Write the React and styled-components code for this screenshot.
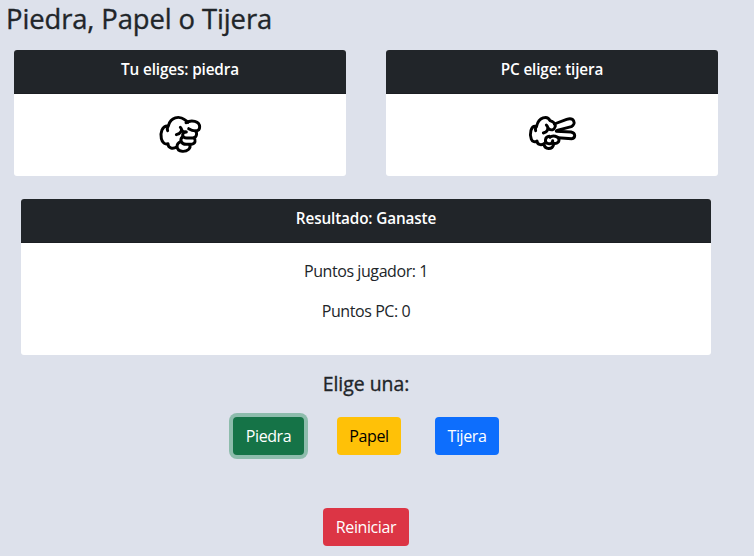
import React from 'react';
import styled, { createGlobalStyle } from 'styled-components';

const GlobalStyle = createGlobalStyle`
  *, *::before, *::after { box-sizing: border-box; }
  body {
    margin: 0;
    background: #dde1eb;
    color: #212529;
    font: 400 16px/24px "Segoe UI", "Open Sans", "Noto Sans", sans-serif;
    overflow: hidden;
  }
`;

const Page = styled.main`
  width: 754px;
  height: 556px;
  overflow: hidden;
`;

const Title = styled.h1`
  margin: 0;
  padding: 2px 0 0 6px;
  height: 50px;
  font-size: 27.4px;
  line-height: 34px;
  font-weight: 500;
  letter-spacing: -0.1px;
  -webkit-text-stroke: 0.35px currentColor;
  white-space: nowrap;
`;

const Choices = styled.section`
  display: grid;
  grid-template-columns: 332px 332px;
  gap: 40px;
  padding-left: 14px;
`;

const Card = styled.article`
  height: ${(p) => p.$height};
  background: #fff;
  border-radius: 3px;
  overflow: hidden;
  text-align: center;
`;

const CardHeader = styled.header`
  height: 44px;
  padding-top: 7px;
  background: #212529;
  border-bottom: 1px solid #1b1e22;
  color: #fff;
  font-size: 15.3px;
  font-weight: 600;
  letter-spacing: -0.14px;
`;

const HandArea = styled.div`
  display: flex;
  justify-content: center;
  padding-top: 11px;

  svg {
    display: block;
    fill: none;
    stroke: #000;
    stroke-width: 8.8;
    stroke-linecap: round;
    stroke-linejoin: round;
  }
`;

const Result = styled.section`
  width: 690px;
  margin: 23px 0 0 21px;
`;

const Score = styled.p`
  margin: 16px 0 0;
  letter-spacing: -0.42px;
`;

const Controls = styled.section`
  width: 732px;
  display: flex;
  flex-direction: column;
  align-items: center;
`;

const Prompt = styled.h2`
  margin: 17px 0 21px;
  font-size: 19.4px;
  line-height: 24px;
  font-weight: 500;
  -webkit-text-stroke: 0.35px currentColor;
`;

const ButtonRow = styled.div`
  display: flex;
  margin-bottom: 53px;
`;

const tones = {
  success: '#157347',
  warning: '#ffc107',
  primary: '#0d6efd',
  danger: '#dc3545',
};

const Button = styled.button`
  height: 38px;
  width: ${(p) => p.$width};
  margin-right: ${(p) => p.$gap || '0'};
  padding: 0 0 1px;
  border: 0;
  border-radius: 4px;
  background: ${(p) => tones[p.$tone]};
  color: ${(p) => (p.$tone === 'warning' ? '#000' : '#fff')};
  box-shadow: ${(p) => (p.$active ? '0 0 0 4px #8dbcac' : 'none')};
  font: inherit;
  letter-spacing: -0.4px;
`;

function RockHand() {
  return (
    <svg width="60" height="60" viewBox="0 0 180 180" aria-label="piedra">
      <path d="M53 63C37 62 30 82 34 101C37 114 45 119 54 116C54 128 67 134 80 126" />
      <path d="M53 77C49 68 55 66 56 60C62 37 87 31 104 44C109 47 112 50 114 52" />
      <path d="M108 53C124 43 149 48 149 66C149 80 132 81 116 71" />
      <path d="M91 67C99 75 93 85 79 89M94 73C97 79 103 82 109 81" />
      <path d="M106 81C93 86 97 99 110 99H128C143 98 141 81 136 78" />
      <path d="M98 95C87 105 95 118 108 118H124C137 116 138 105 132 99" />
      <path d="M92 110C77 116 77 137 97 139C112 140 124 130 119 119" />
    </svg>
  );
}

function ScissorsHand() {
  return (
    <svg width="60" height="60" viewBox="0 0 180 180" aria-label="tijera">
      <path d="M43 64C26 60 22 87 28 103C31 111 39 112 45 108C46 119 57 122 66 116" />
      <path d="M41 77C38 70 42 68 44 63C50 36 76 30 84 47C93 50 99 55 100 62" />
      <path d="M73 60C82 69 77 81 64 84M79 70C88 78 97 75 99 66" />
      <path d="M97 57L134 43C157 36 163 57 148 65L105 76" />
      <path d="M103 79L147 81C162 84 161 100 149 101L108 98" />
      <path d="M84 97C92 89 109 94 111 103C112 114 99 119 90 112" />
      <path d="M82 94C68 95 66 114 79 116C89 118 93 113 92 107" />
      <path d="M66 117C68 134 91 135 95 118" />
    </svg>
  );
}

export default function App() {
  return (
    <>
      <GlobalStyle />
      <Page>
        <Title>Piedra, Papel o Tijera</Title>
        <Choices>
          <Card $height="126px">
            <CardHeader>Tu eliges: piedra</CardHeader>
            <HandArea><RockHand /></HandArea>
          </Card>
          <Card $height="126px">
            <CardHeader>PC elige: tijera</CardHeader>
            <HandArea><ScissorsHand /></HandArea>
          </Card>
        </Choices>
        <Result>
          <Card $height="156px">
            <CardHeader>Resultado: Ganaste</CardHeader>
            <Score>Puntos jugador: 1</Score>
            <Score>Puntos PC: 0</Score>
          </Card>
        </Result>
        <Controls>
          <Prompt>Elige una:</Prompt>
          <ButtonRow>
            <Button $tone="success" $width="71px" $gap="33px" $active>Piedra</Button>
            <Button $tone="warning" $width="64px" $gap="34px">Papel</Button>
            <Button $tone="primary" $width="64px">Tijera</Button>
          </ButtonRow>
          <Button $tone="danger" $width="86px">Reiniciar</Button>
        </Controls>
      </Page>
    </>
  );
}
